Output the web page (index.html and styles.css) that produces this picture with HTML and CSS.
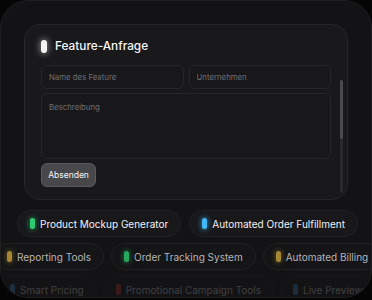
FILE: index.html
```html
<!DOCTYPE html>
<html lang="de">
<head>
    <meta charset="UTF-8">
    <meta name="viewport" content="width=device-width, initial-scale=1.0">
    <title>Feature-Anfrage</title>
    <link rel="stylesheet" href="styles.css">
</head>
<body>
    <div class="frame">
        <div class="panel">
            <div class="panel-head">
                <span class="pill pill-white"></span>
                <h2>Feature-Anfrage</h2>
            </div>
            <div class="panel-body">
                <form class="form" onsubmit="return false">
                    <div class="row">
                        <input type="text" class="inp" placeholder="Name des Feature">
                        <input type="text" class="inp" placeholder="Unternehmen">
                    </div>
                    <textarea class="inp area" placeholder="Beschreibung"></textarea>
                    <button class="btn">Absenden</button>
                </form>
                <div class="scrollbar"><div class="thumb"></div></div>
            </div>
        </div>

        <div class="chips">
            <div class="chip-row row-1">
                <span class="chip"><span class="pill pill-green"></span>Product Mockup Generator</span>
                <span class="chip"><span class="pill pill-blue"></span>Automated Order Fulfillment</span>
            </div>
            <div class="chip-row row-2">
                <span class="chip"><span class="pill pill-yellow"></span>Reporting Tools</span>
                <span class="chip"><span class="pill pill-green"></span>Order Tracking System</span>
                <span class="chip"><span class="pill pill-yellow"></span>Automated Billing</span>
            </div>
            <div class="chip-row row-3">
                <span class="chip"><span class="pill pill-navy"></span>Smart Pricing</span>
                <span class="chip"><span class="pill pill-red"></span>Promotional Campaign Tools</span>
                <span class="chip"><span class="pill pill-navy"></span>Live Preview</span>
            </div>
        </div>
    </div>
</body>
</html>
```

FILE: styles.css
```css
*{
    box-sizing: border-box;
}
body{
    margin: 0;
    background: #050506;
    font-family: Inter, "Noto Sans", sans-serif;
    color: #f2f2f3;
}
.frame{
    width: 372px;
    height: 298px;
    border-radius: 28px;
    overflow: hidden;
    background: #131315;
    border: 1px solid #1f1f22;
    padding: 23px 23px 0 23px;
}
.panel{
    background: #19191c;
    border: 1px solid #27272a;
    border-radius: 16px;
    height: 176px;
    padding: 13px 4px 0 15px;
}
.panel-head{
    display: flex;
    align-items: center;
    gap: 8px;
    height: 16px;
    margin-left: 1px;
}
.panel-head h2{
    margin: 0;
    font-size: 11.8px;
    font-weight: 500;
    color: #f5f5f6;
}
.pill{
    display: inline-block;
    flex: none;
    width: 5px;
    height: 11px;
    border-radius: 3px;
}
.panel-head .pill{
    width: 6px;
    height: 13px;
}
.pill-white{
    background: #f4f4f5;
    box-shadow: 0 0 6px 1px rgba(255,255,255,0.45);
}
.pill-green{
    background: #2ecc71;
    box-shadow: 0 0 5px 1px rgba(46,204,113,0.5);
}
.pill-blue{
    background: #3fb8f5;
    box-shadow: 0 0 5px 1px rgba(63,184,245,0.55);
}
.pill-yellow{
    background: #c9a23a;
    box-shadow: 0 0 5px 1px rgba(201,162,58,0.45);
}
.pill-navy{
    background: #3a6a9a;
}
.pill-red{
    background: #9a2b2b;
}
.panel-body{
    display: flex;
    margin-top: 11px;
}
.form{
    flex: 1;
    display: flex;
    flex-direction: column;
    gap: 4px;
    margin: 0 9px 0 1px;
}
.row{
    display: flex;
    gap: 5px;
}
.inp{
    flex: 1;
    min-width: 0;
    height: 24px;
    background: #18181b;
    border: 1px solid #27272a;
    border-radius: 6px;
    padding: 0 7px;
    font-family: Inter, "Noto Sans", sans-serif;
    font-size: 7.8px;
    color: #e4e4e7;
    outline: none;
}
.inp::placeholder{
    color: #6e6e74;
}
.area{
    flex: none;
    height: 66px;
    padding: 8px 7px;
    resize: none;
}
.btn{
    align-self: flex-start;
    height: 24px;
    width: 55px;
    padding: 0;
    background: #48484b;
    border: 1px solid #5a5a5e;
    border-radius: 6px;
    color: #f4f4f5;
    font-family: Inter, "Noto Sans", sans-serif;
    font-size: 8.5px;
    cursor: pointer;
}
.scrollbar{
    width: 3px;
    height: 113px;
    margin-top: 15px;
    border-radius: 2px;
    background: #2a2a2e;
}
.thumb{
    height: 59px;
    border-radius: 2px;
    background: #4a4a4f;
}
.chips{
    display: flex;
    flex-direction: column;
    gap: 6px;
    margin: 10px -23px 0 -23px;
}
.chip-row{
    display: flex;
    gap: 9px;
    white-space: nowrap;
}
.chip{
    display: inline-flex;
    align-items: center;
    gap: 5px;
    flex: none;
    height: 27px;
    padding: 0 12px;
    border-radius: 14px;
    background: #18181b;
    border: 1px solid #222225;
    font-size: 10px;
    color: #f2f2f3;
}
.row-1{
    margin-left: 16px;
    gap: 8px;
}
.row-2{
    margin-left: -7px;
    gap: 7px;
}
.row-2 .chip{
    color: #b4b4b8;
    background: #151517;
}
.row-2 .pill{
    opacity: 0.8;
}
.row-3{
    margin-left: -4px;
    gap: 6px;
    opacity: 0.3;
}
.row-3 .chip{
    color: #a0a0a5;
    background: #151517;
}
```
